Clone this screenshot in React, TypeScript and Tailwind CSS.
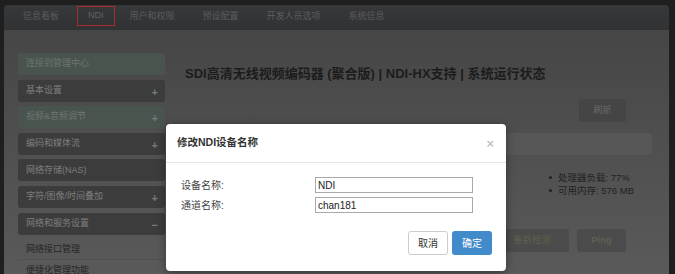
import { useState } from "react";

const tabs = ["信息看板", "NDI", "用户和权限", "预设配置", "开发人员选项", "系统信息"];

const menu = [
  { label: "连接到管理中心", tone: "green", icon: "" },
  { label: "基本设置", tone: "dark", icon: "+" },
  { label: "视频&音频调节", tone: "green", icon: "+" },
  { label: "编码和媒体流", tone: "dark", icon: "+" },
  { label: "网络存储(NAS)", tone: "dark", icon: "" },
  { label: "字符/图像/时间叠加", tone: "dark", icon: "+" },
  { label: "网络和服务设置", tone: "dark", icon: "−" },
];

export default function App() {
  const [deviceName, setDeviceName] = useState("NDI");
  const [channelName, setChannelName] = useState("chan181");

  return (
    <div className="relative h-[274px] w-[675px] overflow-hidden bg-[#1e1f1e] pl-[4px] pr-[6px] pt-[5px] font-['Liberation_Sans','Noto_Sans_CJK_SC',sans-serif]">
      <div className="flex h-full flex-col overflow-hidden rounded-t-[4px]">
        {/* Tabs */}
        <div className="flex h-[25px] shrink-0 items-start bg-gradient-to-b from-[#37383a] to-[#313234] pl-[5px] pt-[1px]">
          {tabs.map((tab) =>
            tab === "NDI" ? (
              <div
                key={tab}
                className="ml-[4px] mr-[1px] flex h-[20px] items-center border-[1.5px] border-[#a82a2a] px-[10px] text-[9px] text-[#616263]"
              >
                {tab}
              </div>
            ) : (
              <div key={tab} className="flex h-[22px] items-center px-[14px] text-[9px] text-[#5b5c5d]">
                {tab}
              </div>
            )
          )}
        </div>

        {/* Content */}
        <div className="flex flex-1 bg-gradient-to-b from-[#464646] to-[#5a5a5a]">
          {/* Sidebar */}
          <div className="flex w-[161px] shrink-0 flex-col pl-[14px] pt-[23px]">
            <div className="flex flex-col gap-[4.6px]">
              {menu.map((item) => (
                <div
                  key={item.label}
                  className={`flex h-[22px] items-center justify-between rounded-[3px] pl-[8px] pr-[7px] text-[9px] ${
                    item.tone === "green"
                      ? "bg-[#4a544e] text-[#6c7771]"
                      : "bg-[#3c3c3c] text-[#7e7e7e]"
                  }`}
                >
                  <span>{item.label}</span>
                  <span className="mt-[3px] text-[11px] font-bold leading-none text-[#6f7d80]">{item.icon}</span>
                </div>
              ))}
            </div>
            <div className="mt-[8px] border-b border-dotted border-[#4a4a4a] pb-[3px] pl-[8px] text-[9px] leading-[13px] text-[#262626]">
              网络接口管理
            </div>
            <div className="pl-[8px] pt-[4px] text-[9px] leading-[13px] text-[#262626]">便捷化管理功能</div>
          </div>

          {/* Main */}
          <div className="flex flex-1 flex-col">
            <div className="mt-[35px] pl-[20px] text-[13px] font-bold leading-[18px] text-[#1c1c1c]">
              SDI高清无线视频编码器 (聚合版) | NDI-HX支持 | 系统运行状态
            </div>
            <div className="mt-[16px] flex justify-end pr-[43px]">
              <div className="flex h-[23px] w-[47px] items-center justify-center rounded-[3px] bg-[#454545] text-[9px] text-[#6a6a6a]">
                刷新
              </div>
            </div>
            <div className="ml-[20px] mr-[17px] mt-[11px] h-[22px] rounded-[4px] bg-[#575757]" />
            <ul className="ml-[384px] mt-[16px] flex flex-col text-[9.5px] leading-[13px] text-[#222]">
              <li className="flex items-center gap-[6px]">
                <span className="h-[3px] w-[3px] rounded-full bg-[#222]" />
                处理器负载: 77%
              </li>
              <li className="flex items-center gap-[6px]">
                <span className="h-[3px] w-[3px] rounded-full bg-[#222]" />
                可用内存: 576 MB
              </li>
            </ul>
            <div className="mt-[32px] flex justify-end gap-[8px] pr-[43px]">
              <div className="flex h-[23px] w-[74px] items-center justify-center rounded-[3px] bg-[#4b4b4b] text-[9.5px] text-[#5e624d]">
                重新检测
              </div>
              <div className="flex h-[23px] w-[49px] items-center justify-center rounded-[3px] bg-[#4b4b4b] text-[9.5px] font-bold text-[#5f6052]">
                Ping
              </div>
            </div>
          </div>
        </div>
      </div>

      {/* Modal */}
      <div className="absolute left-[166px] top-[124px] flex h-[147px] w-[340px] flex-col rounded-[4px] bg-white shadow-[0_2px_8px_rgba(0,0,0,0.4)]">
        <div className="flex h-[39px] shrink-0 items-center justify-between border-b border-[#e5e5e5] pl-[11px] pr-[12px]">
          <span className="text-[10.5px] font-bold text-[#333]">修改NDI设备名称</span>
          <span className="text-[13px] font-bold leading-none text-[#c4c4c4]">×</span>
        </div>
        <div className="flex flex-col gap-[4px] pl-[15px] pt-[14px]">
          <div className="flex items-center">
            <span className="w-[134px] text-[10px] text-[#444]">设备名称:</span>
            <input
              value={deviceName}
              onChange={(e) => setDeviceName(e.target.value)}
              className="h-[16px] w-[158px] border border-[#a9a9a9] pl-[2px] text-[10px] text-[#222] outline-none"
            />
          </div>
          <div className="flex items-center">
            <span className="w-[134px] text-[10px] text-[#444]">通道名称:</span>
            <input
              value={channelName}
              onChange={(e) => setChannelName(e.target.value)}
              className="h-[16px] w-[158px] border border-[#a9a9a9] pl-[2px] text-[10px] text-[#222] outline-none"
            />
          </div>
        </div>
        <div className="mt-[18px] flex justify-end gap-[4px] pr-[14px]">
          <button className="h-[24px] w-[40px] rounded-[3px] border border-[#ccc] bg-white text-[10px] text-[#333]">
            取消
          </button>
          <button className="h-[24px] w-[40px] rounded-[3px] bg-[#428bca] text-[10px] text-white">确定</button>
        </div>
      </div>
    </div>
  );
}
